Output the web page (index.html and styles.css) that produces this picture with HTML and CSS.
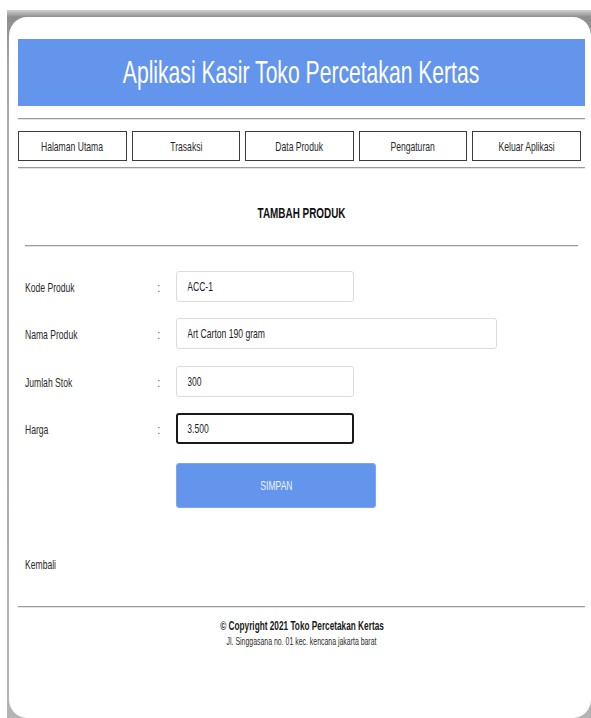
FILE: index.html
```html
<!DOCTYPE html>
<html lang="id">
<head>
<meta charset="utf-8">
<title>Tambah Produk - Aplikasi Kasir</title>
<link rel="stylesheet" href="styles.css">
</head>
<body>
<div class="frame">
  <div class="card">
    <header class="banner">
      <h1 class="banner-title"><span class="sq">Aplikasi Kasir Toko Percetakan Kertas</span></h1>
    </header>
    <hr class="rule rule-top">
    <nav class="menu">
      <a class="menu-item" href="#"><span class="sq">Halaman Utama</span></a>
      <a class="menu-item" href="#"><span class="sq">Trasaksi</span></a>
      <a class="menu-item" href="#"><span class="sq">Data Produk</span></a>
      <a class="menu-item" href="#"><span class="sq">Pengaturan</span></a>
      <a class="menu-item" href="#"><span class="sq">Keluar Aplikasi</span></a>
    </nav>
    <hr class="rule rule-menu">

    <main class="content">
      <h2 class="content-title"><span class="sq">TAMBAH PRODUK</span></h2>
      <hr class="rule rule-title">

      <form class="product-form">
        <div class="field">
          <label class="field-label" for="kode"><span class="sq sq-left">Kode Produk</span></label>
          <span class="field-sep">:</span>
          <span class="field-box"><input class="field-input" id="kode" type="text" value="ACC-1"></span>
        </div>
        <div class="field">
          <label class="field-label" for="nama"><span class="sq sq-left">Nama Produk</span></label>
          <span class="field-sep">:</span>
          <span class="field-box field-box-wide"><input class="field-input" id="nama" type="text" value="Art Carton 190 gram"></span>
        </div>
        <div class="field">
          <label class="field-label" for="stok"><span class="sq sq-left">Jumlah Stok</span></label>
          <span class="field-sep">:</span>
          <span class="field-box"><input class="field-input" id="stok" type="text" value="300"></span>
        </div>
        <div class="field">
          <label class="field-label" for="harga"><span class="sq sq-left">Harga</span></label>
          <span class="field-sep">:</span>
          <span class="field-box is-active"><input class="field-input" id="harga" type="text" value="3.500"></span>
        </div>
        <button class="save-button" type="button"><span class="sq">SIMPAN</span></button>
      </form>

      <a class="back-link" href="#"><span class="sq sq-left">Kembali</span></a>
    </main>

    <hr class="rule rule-footer">
    <footer class="footer">
      <p class="footer-copy"><span class="sq">© Copyright 2021 Toko Percetakan Kertas</span></p>
      <p class="footer-address"><span class="sq">Jl. Singgasana no. 01 kec. kencana jakarta barat</span></p>
    </footer>
  </div>
</div>
</body>
</html>
```

FILE: styles.css
```css
html, body {
  margin: 0;
  padding: 0;
  background: #ffffff;
  overflow: hidden;
}

body {
  padding-top: 10px;
  font-family: "Liberation Sans", Arial, sans-serif;
  color: #2a2a2a;
}

/* condensed lettering used across the app */
.sq {
  display: inline-block;
  white-space: nowrap;
  transform: scaleX(0.66);
}

.sq-left {
  transform-origin: left center;
}

/* grey bezel: shaded band on top, thin edge on the left */
.frame {
  margin-left: 7px;
  width: 584px;
  padding: 7px 0 0 2px;
  box-sizing: border-box;
  background:
    linear-gradient(#ffffff, #ffffff) right 30px / 20px calc(100% - 50px) no-repeat,
    linear-gradient(to bottom, #d2d2d2 0, #8e8e8e 7px, #a9a9a9 60px, #b4b4b4 100%);
}

.card {
  background: #ffffff;
  height: 701px;
  box-sizing: border-box;
  padding: 22px 6px 0 9px;
  border-radius: 18px / 19px;
}

/* header banner */
.banner {
  height: 67px;
  background: #6495ed;
  display: flex;
  align-items: center;
  justify-content: center;
}

.banner-title {
  margin: 0;
  font-size: 32px;
  font-weight: normal;
  color: #ffffff;
  line-height: 1;
  padding-bottom: 2px;
}

/* horizontal rules */
.rule {
  display: block;
  height: 0;
  margin: 0;
  border: 0;
  border-top: 1px solid #9b9b9b;
  border-bottom: 1px solid #e4e4e4;
}

.rule-top { margin-top: 12px; }
.rule-menu { margin-top: 6px; }
.rule-title { margin-top: 22px; }
.rule-footer { margin-top: 32px; }

/* menu */
.menu {
  margin-top: 11px;
  margin-right: 4px;
  display: flex;
  gap: 5px;
}

.menu-item {
  flex: 1;
  height: 30px;
  box-sizing: border-box;
  display: flex;
  align-items: center;
  justify-content: center;
  border: 1px solid #3c3c3c;
  border-bottom-width: 1.4px;
  background: #ffffff;
  color: #2a2a2a;
  font-size: 13px;
  text-decoration: none;
}

/* content */
.content {
  padding: 0 7px;
}

.content-title {
  margin: 34px 0 0;
  text-align: center;
  font-size: 15px;
  line-height: 20px;
  font-weight: bold;
  color: #111111;
}

.product-form {
  margin-top: 24px;
  display: flex;
  flex-direction: column;
  gap: 16.3px;
}

.field {
  display: grid;
  grid-template-columns: 132px 19px auto;
  align-items: center;
  height: 31px;
}

.field-label {
  font-size: 13px;
  color: #2a2a2a;
  padding-top: 2px;
}

.field-sep {
  font-size: 13px;
  color: #777777;
  padding-top: 2px;
}

.field-box {
  display: block;
  width: 178px;
  height: 31px;
  box-sizing: border-box;
  border: 1px solid #dcdcdc;
  border-radius: 3px;
  background: #ffffff;
  overflow: hidden;
}

.field-box-wide {
  width: 321px;
}

.field-box.is-active {
  border: 2px solid #1a1a1a;
}

.field-input {
  display: block;
  width: 151.5%;
  height: 100%;
  box-sizing: border-box;
  margin: 0;
  padding: 0 0 0 15.5px;
  border: 0;
  background: transparent;
  font-family: inherit;
  font-size: 13px;
  color: #1e1e1e;
  outline: none;
  transform: scaleX(0.66);
  transform-origin: left center;
}

.is-active .field-input {
  padding-left: 14px;
}

.save-button {
  margin: 2.7px 0 0 151px;
  width: 200px;
  height: 45px;
  padding: 0;
  border: 1px solid #7ea6ef;
  border-radius: 3px;
  background: #6495ed;
  color: #eef3fd;
  font-family: inherit;
  font-size: 13px;
}

.back-link {
  display: block;
  margin-top: 48px;
  line-height: 18px;
  font-size: 13px;
  color: #2a2a2a;
  text-decoration: none;
}

/* footer */
.footer {
  text-align: center;
  color: #1a1a1a;
}

.footer-copy {
  margin: 10px 0 0;
  font-size: 12.5px;
  line-height: 16px;
  font-weight: bold;
}

.footer-address {
  margin: 0;
  font-size: 10.5px;
  line-height: 14px;
  color: #2a2a2a;
}
```
